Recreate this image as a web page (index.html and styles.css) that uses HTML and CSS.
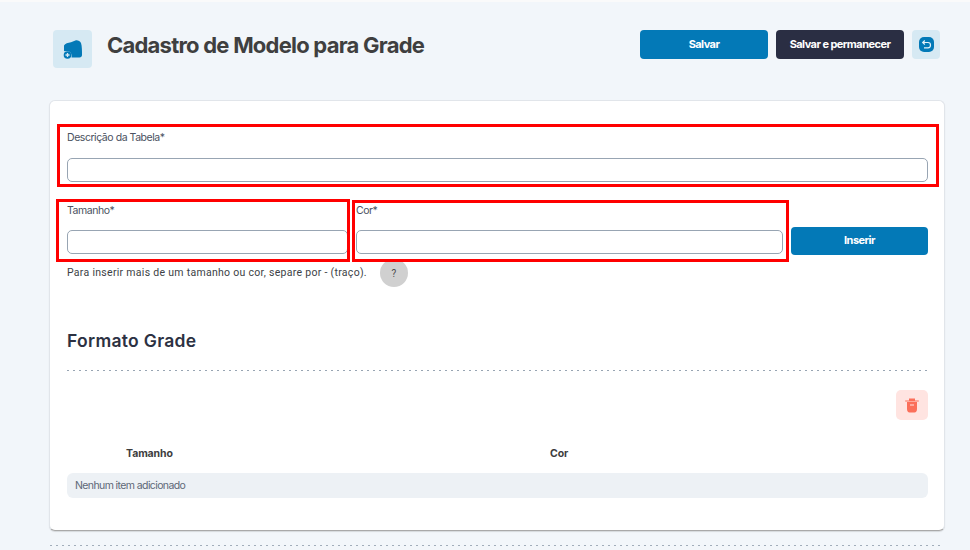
FILE: index.html
```html
<!DOCTYPE html>
<html lang="pt-BR">
<head>
<meta charset="utf-8">
<title>Cadastro de Modelo para Grade</title>
<link rel="stylesheet" href="styles.css">
</head>
<body>
<div class="page">
  <header class="header">
    <div class="header-left">
      <div class="page-icon">
        <svg width="20" height="20" viewBox="0 0 20 20"><path fill="#0379b7" d="M1 6.500C2 4.500 5 3.800 8 3.200L13 1.200C15 1 17 2 18 4C19 7 19 12 19 16C19 17.500 18 18.500 16.500 18.500H8.500C9.500 14 6 11 2 12.200L1 12Z"/><circle cx="4.500" cy="16" r="3.800" fill="#0379b7"/><path stroke="#d6e9f3" stroke-width="1.300" d="M2.500 16H6.500M4.500 14V18"/></svg>
      </div>
      <h1 class="title">Cadastro de Modelo para Grade</h1>
    </div>
    <div class="actions">
      <button class="btn btn-primary">Salvar</button>
      <button class="btn btn-dark">Salvar e permanecer</button>
      <button class="btn-back" aria-label="Voltar">
        <svg width="15" height="15" viewBox="0 0 15 15"><rect width="15" height="15" rx="5" fill="#0379b7"/><path fill="none" stroke="#e4f1f8" stroke-width="1.200" d="M5.800 3.500L3.700 5.500L5.800 7.500M3.700 5.500H9C10.500 5.500 11.500 6.600 11.500 8S10.500 10.800 9 10.800H5"/></svg>
      </button>
    </div>
  </header>

  <main class="card">
    <div class="field field-full">
      <span class="mark mark-full"></span>
      <label class="label">Descrição da Tabela*</label>
      <input class="input" type="text">
    </div>

    <div class="insert-row">
      <div class="field field-size">
        <span class="mark mark-size"></span>
        <label class="label">Tamanho*</label>
        <input class="input" type="text">
      </div>
      <div class="field field-color">
        <span class="mark mark-color"></span>
        <label class="label">Cor*</label>
        <input class="input" type="text">
      </div>
      <button class="btn btn-primary btn-insert">Inserir</button>
    </div>

    <div class="hint-row">
      <span class="hint">Para inserir mais de um tamanho ou cor, separe por - (traço).</span>
      <span class="help">?</span>
    </div>

    <h2 class="section-title">Formato Grade</h2>
    <div class="dots"></div>

    <div class="toolbar">
      <button class="btn-trash" aria-label="Excluir">
        <svg width="14" height="15" viewBox="0 0 14 15"><path fill="#fb6f5a" d="M4 0.500H10V2.500H13.800V3.500H0.200V2.500H4Z"/><path fill="#fb6f5a" d="M2 4H12V11C12 13 11 14.500 9.500 14.500H4.500C3 14.500 2 13 2 11Z"/><rect x="5" y="6.500" width="4" height="1" fill="#ffe4e1"/></svg>
      </button>
    </div>

    <div class="table-head">
      <span class="col-size">Tamanho</span>
      <span class="col-color">Cor</span>
    </div>
    <div class="table-empty">Nenhum item adicionado</div>
  </main>
  <div class="dots dots-page"></div>
</div>
</body>
</html>
```
FILE: styles.css
```css
* { box-sizing: border-box; }
html, body { margin: 0; height: 100%; }
body {
  background: #f2f6fa;
  font-family: "Inter", "Liberation Sans", sans-serif;
  color: #3d3d3d;
  overflow: hidden;
}
.page {
  height: 550px;
  border-top: 2px solid #fafafa;
  padding: 28px 26px 0 50px;
}
.header {
  display: flex;
  justify-content: space-between;
  align-items: flex-start;
  height: 70px;
}
.header-left { display: flex; align-items: flex-start; padding-left: 3px; }
.page-icon {
  width: 39px;
  height: 38px;
  background: #d6e9f3;
  border-radius: 4px;
  display: flex;
  align-items: center;
  justify-content: center;
}
.title {
  margin: 2px 0 0 15px;
  font-size: 22px;
  line-height: 26px;
  font-weight: 700;
  letter-spacing: -0.77px;
  color: #3f3f3f;
}
.actions { display: flex; gap: 8px; padding-right: 4px; }
.btn {
  border: 0;
  border-radius: 4px;
  width: 128px;
  height: 29px;
  font-family: inherit;
  font-size: 11px;
  font-weight: 700;
  letter-spacing: -0.55px;
  color: #fff;
  padding: 0 0 2px;
}
.btn-primary { background: #0379b7; }
.btn-dark { background: #2a2e43; }
.btn-back {
  width: 28px;
  height: 29px;
  border: 0;
  border-radius: 4px;
  background: #d6e9f3;
  padding: 0;
  display: flex;
  align-items: center;
  justify-content: center;
}
.card {
  width: 896px;
  height: 431px;
  margin: 0 0 0 -1px;
  background: #fff;
  border-radius: 6px;
  border: 1px solid #e1e5ea;
  border-bottom-color: #a9a9a9;
  box-shadow: 0 1px 1px rgba(0, 0, 0, 0.12);
  padding: 30px 16px 0 17px;
}
.field { position: relative; display: flex; flex-direction: column; }
.mark { position: absolute; border: 3px solid #f00; pointer-events: none; }
.mark-full { left: -10px; right: -11px; top: -7px; height: 63px; }
.mark-size { left: -11px; right: -2px; top: -5px; height: 63px; }
.mark-color { left: -4px; right: -6px; top: -4px; height: 62px; }
.label {
  font-size: 10.5px;
  line-height: 14px;
  letter-spacing: -0.45px;
  color: #4a5160;
  margin-bottom: 13px;
}
.input {
  display: block;
  width: 100%;
  height: 24px;
  border: 1px solid #98a5b3;
  border-radius: 5px;
  background: #fff;
  outline: 0;
}
.insert-row {
  display: flex;
  align-items: flex-end;
  margin-top: 22px;
}
.field-size { width: 281px; }
.field-color { width: 427px; margin-left: 8px; }
.btn-insert { width: 137px; height: 28px; margin-left: 8px; margin-bottom: -1px; }
.insert-row .label { margin-bottom: 12px; }
.hint-row {
  display: flex;
  align-items: center;
  height: 28px;
  margin-top: 5px;
}
.hint {
  font-family: "Roboto", "Liberation Sans", sans-serif;
  font-size: 10.5px;
  letter-spacing: 0.29px;
  color: #3c3f46;
  margin-bottom: 2px;
}
.help {
  width: 28px;
  height: 28px;
  margin-left: 13px;
  border-radius: 50%;
  background: #d0d0d0;
  display: flex;
  align-items: center;
  justify-content: center;
  font-family: "Roboto", "Liberation Sans", sans-serif;
  font-size: 10px;
  color: #4a4a4a;
}
.section-title {
  margin: 43px 0 0;
  font-family: "Inter", "Open Sans", sans-serif;
  font-size: 17.5px;
  line-height: 22px;
  font-weight: 600;
  letter-spacing: 0.3px;
  color: #2c3142;
}
.dots {
  height: 1px;
  margin-top: 18px;
  background-image: repeating-linear-gradient(to right, #98a5b3 0 2px, transparent 2px 6px);
}
.dots-page { margin-top: 14px; width: 894px; opacity: 0.9; }
.toolbar { display: flex; justify-content: flex-end; margin-top: 19px; }
.btn-trash {
  width: 32px;
  height: 30px;
  border: 0;
  border-radius: 5px;
  background: #ffe4e1;
  padding: 0;
  display: flex;
  align-items: center;
  justify-content: center;
}
.table-head {
  display: flex;
  height: 53px;
  padding-top: 27px;
  font-size: 10.5px;
  line-height: 14px;
  font-weight: 700;
  letter-spacing: -0.1px;
  color: #3d3d3d;
}
.col-size { margin-left: 59px; width: 424px; }
.table-empty {
  height: 25px;
  line-height: 25px;
  padding-left: 8px;
  background: #edf1f5;
  border-radius: 6px;
  font-size: 10.5px;
  letter-spacing: -0.6px;
  color: #5d6877;
}
```
